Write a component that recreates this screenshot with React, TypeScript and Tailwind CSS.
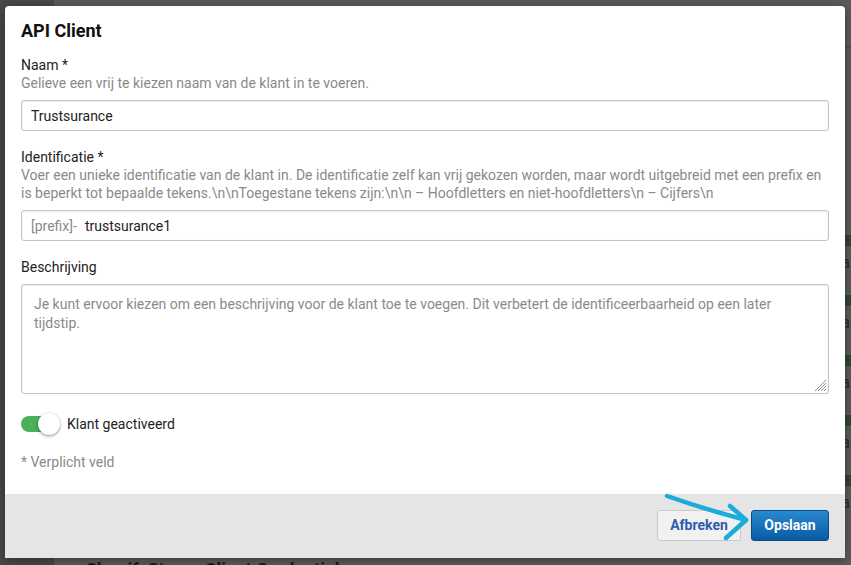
import { useState } from 'react';

const rows = [0, 1, 2, 3, 4];

function Backdrop() {
  return (
    <div className="flex h-full w-full">
      <div className="w-[54px] shrink-0 bg-[#484948]" />
      <div className="flex flex-1 flex-col bg-[#5b5c5b]">
        <div className="h-[48px] border-b border-[#3d5a3d]" />
        <div className="h-[176px]" />
        {rows.map((r) => (
          <div key={r} className="flex h-[60px] flex-col items-end border-t border-[#555655]">
            <div className="mt-[10px] h-[11px] w-[10px] bg-[#2e4a2e]" />
            <div className="mt-[8px] pr-[1px] text-[16px] leading-[18px] text-[#2a2a2a]">a</div>
          </div>
        ))}
        <div className="flex-1" />
        <div className="h-[7px] overflow-hidden pl-[32px]">
          <div className="pt-[2px] text-[18px] leading-[20px] font-bold text-[#1c1c1c]">ShopifyStores Client Credentials</div>
        </div>
      </div>
    </div>
  );
}

function Field({ label, help, children }: { label: string; help?: React.ReactNode; children: React.ReactNode }) {
  return (
    <div className="flex flex-col">
      <div className="text-[14px] leading-[18px] text-[#222]">{label}</div>
      {help && <div className="text-[14px] leading-[18px] text-[#8a8a8a]">{help}</div>}
      <div className="mt-[8px]">{children}</div>
    </div>
  );
}

export default function App() {
  const [active, setActive] = useState(true);

  return (
    <div
      className="relative h-[565px] w-[851px] overflow-hidden"
      style={{ fontFamily: 'Roboto, "Liberation Sans", sans-serif' }}
    >
      <Backdrop />

      <div className="absolute left-[5px] top-[6px] flex h-[552px] w-[840px] flex-col overflow-hidden rounded-t-[4px] bg-white shadow-[0_2px_12px_rgba(0,0,0,0.4)]">
        <div className="flex flex-1 flex-col px-[16px] pt-[14px]">
          <h1 className="text-[18px] leading-[22px] font-bold text-[#111]">API Client</h1>

          <div className="mt-[14px] flex flex-col gap-[17px]">
            <Field label="Naam *" help="Gelieve een vrij te kiezen naam van de klant in te voeren.">
              <div className="flex h-[31px] items-center rounded-[3px] border border-[#c4c4c4] px-[9px] pt-[1px] text-[14px] text-[#222] shadow-[inset_0_1px_2px_rgba(0,0,0,0.08)]">
                Trustsurance
              </div>
            </Field>

            <Field
              label="Identificatie *"
              help={
                <>
                  Voer een unieke identificatie van de klant in. De identificatie zelf kan vrij gekozen worden, maar wordt uitgebreid met een prefix en
                  <br />
                  is beperkt tot bepaalde tekens.\n\nToegestane tekens zijn:\n\n – Hoofdletters en niet-hoofdletters\n – Cijfers\n
                </>
              }
            >
              <div className="flex h-[31px] items-center rounded-[3px] border border-[#c4c4c4] px-[9px] pt-[1px] text-[14px] shadow-[inset_0_1px_2px_rgba(0,0,0,0.08)]">
                <span className="text-[#8a8a8a]">[prefix]-</span>
                <span className="ml-[8px] text-[#222]">trustsurance1</span>
              </div>
            </Field>

            <Field label="Beschrijving">
              <div className="relative h-[110px] rounded-[3px] border border-[#c4c4c4] px-[12px] pt-[10px] text-[14px] leading-[19px] text-[#8a8a8a] shadow-[inset_0_1px_2px_rgba(0,0,0,0.08)]">
                Je kunt ervoor kiezen om een beschrijving voor de klant toe te voegen. Dit verbetert de identificeerbaarheid op een later
                <br />
                tijdstip.
                <svg className="absolute bottom-[1px] right-[1px]" width="14" height="14" viewBox="0 0 14 14">
                  <path d="M13 2L2 13M13 5L5 13M13 8L8 13M13 11L11 13" stroke="#8a8a8a" strokeWidth="1" />
                </svg>
              </div>
            </Field>
          </div>

          <div className="mt-[19px] flex items-center gap-[7px]">
            <button
              onClick={() => setActive(!active)}
              className="relative flex h-[22px] w-[39px] items-center"
            >
              <span className={`h-[16px] w-[36px] rounded-full ${active ? 'bg-[#4caf5c]' : 'bg-[#bbb]'}`} />
              <span
                className={`absolute top-0 h-[22px] w-[22px] rounded-full bg-white shadow-[0_1px_3px_rgba(0,0,0,0.45)] ${
                  active ? 'left-[17px]' : 'left-0'
                }`}
              />
            </button>
            <span className="text-[14px] text-[#222]">Klant geactiveerd</span>
          </div>

          <div className="mt-[18px] text-[14px] leading-[18px] text-[#8a8a8a]">* Verplicht veld</div>
        </div>

        <div className="flex h-[64px] items-start justify-end gap-[10px] bg-[#e5e5e5] px-[16px] pt-[16px]">
          <button className="h-[31px] w-[84px] rounded-[3px] border border-[#cacaca] bg-[#f1f1f1] text-[14px] font-bold text-[#2f5cae]">
            Afbreken
          </button>
          <button className="h-[31px] w-[78px] rounded-[3px] border border-[#0a4c8a] bg-gradient-to-b from-[#2789cf] to-[#0a5ba4] text-[14px] font-bold text-white">
            Opslaan
          </button>
        </div>
      </div>

      <svg className="pointer-events-none absolute left-0 top-0" width="851" height="565">
        <path d="M667 496 Q704 509 746 520" stroke="#1aaddc" strokeWidth="4.5" fill="none" strokeLinecap="round" />
        <path d="M730 506 L746 520 L726 538" stroke="#1aaddc" strokeWidth="4.5" fill="none" strokeLinecap="round" strokeLinejoin="round" />
      </svg>
    </div>
  );
}
